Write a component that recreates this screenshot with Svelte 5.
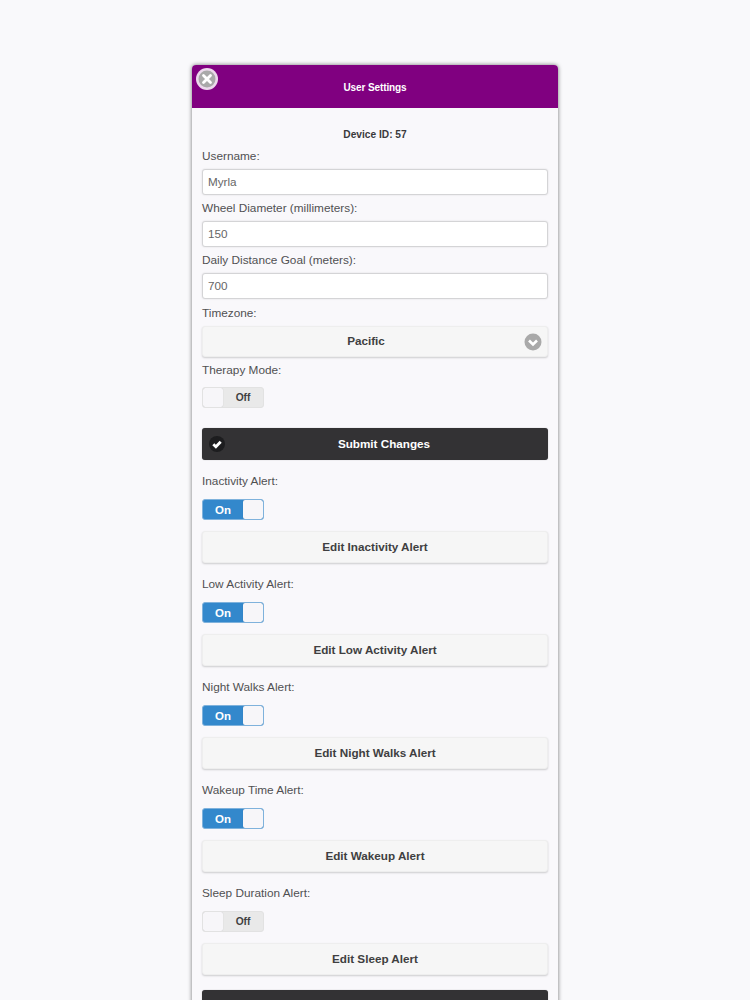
<script lang="ts">
	const fields = [
		{ label: 'Username:', value: 'Myrla' },
		{ label: 'Wheel Diameter (millimeters):', value: '150' },
		{ label: 'Daily Distance Goal (meters):', value: '700' }
	];

	const alerts = [
		{ label: 'Inactivity Alert:', on: true, button: 'Edit Inactivity Alert' },
		{ label: 'Low Activity Alert:', on: true, button: 'Edit Low Activity Alert' },
		{ label: 'Night Walks Alert:', on: true, button: 'Edit Night Walks Alert' },
		{ label: 'Wakeup Time Alert:', on: true, button: 'Edit Wakeup Alert' },
		{ label: 'Sleep Duration Alert:', on: false, button: 'Edit Sleep Alert' }
	];
</script>

{#snippet toggle(on: boolean)}
	<div class="toggle" class:on>
		{#if on}
			<span class="toggle-text">On</span>
			<span class="knob"></span>
		{:else}
			<span class="knob"></span>
			<span class="toggle-text">Off</span>
		{/if}
	</div>
{/snippet}

<div class="page">
	<div class="card">
		<header class="header">
			<span class="close">
				<svg viewBox="0 0 22 22" width="22" height="22">
					<circle cx="11" cy="11" r="11" fill="#fff" fill-opacity="0.85" />
					<circle cx="11" cy="11" r="8.5" fill="#a9a9a9" />
					<path d="M7.5 7.5l7 7M14.5 7.5l-7 7" stroke="#fff" stroke-width="2.8" stroke-linecap="round" />
				</svg>
			</span>
			<h1>User Settings</h1>
		</header>

		<div class="content">
			<p class="device">Device ID: 57</p>

			{#each fields as field}
				<p class="label field-label">{field.label}</p>
				<input class="input" type="text" value={field.value} />
			{/each}

			<p class="label zone-label">Timezone:</p>
			<div class="btn select">
				<span class="select-text">Pacific</span>
				<svg class="chevron" viewBox="0 0 18 18" width="18" height="18">
					<circle cx="9" cy="9" r="8.5" fill="#a9a9a9" />
					<path d="M5 7.5l4 4 4-4" fill="none" stroke="#fff" stroke-width="2.6" />
				</svg>
			</div>

			<p class="label therapy">Therapy Mode:</p>
			{@render toggle(false)}

			<div class="btn dark submit">
				<svg class="check" viewBox="0 0 16 16" width="16" height="16">
					<circle cx="8" cy="8" r="8" fill="#1d1d1f" />
					<path d="M4.3 8.2l2.6 2.6 4.8-5" fill="none" stroke="#fff" stroke-width="2.8" />
				</svg>
				Submit Changes
			</div>

			{#each alerts as alert}
				<section class="alert">
					<p class="label">{alert.label}</p>
					{@render toggle(alert.on)}
					<div class="btn edit">{alert.button}</div>
				</section>
			{/each}

			<div class="btn dark last"></div>
		</div>
	</div>
</div>

<style>
	:global(body) {
		margin: 0;
		background: #f9f9fb;
	}

	.page {
		height: 1000px;
		overflow: hidden;
		padding-top: 65px;
		box-sizing: border-box;
		font-family: 'Liberation Sans', Arial, sans-serif;
		color: #4a4a4c;
	}

	.card {
		width: 366px;
		margin: 0 auto;
		background: #f9f8fb;
		border-radius: 4px 4px 0 0;
		box-shadow: 0 0 4px rgba(0, 0, 0, 0.55);
	}

	.header {
		position: relative;
		height: 43px;
		display: flex;
		align-items: center;
		justify-content: center;
		background: #800080;
		border-radius: 4px 4px 0 0;
	}

	.header h1 {
		margin: 2px 0 0;
		font-size: 10px;
		letter-spacing: -0.1px;
		font-weight: 700;
		color: #fff;
	}

	.close {
		position: absolute;
		left: 4px;
		top: 3px;
		width: 22px;
		height: 22px;
	}

	.close svg,
	.chevron,
	.check {
		display: block;
	}

	.content {
		padding: 21px 10px 0;
		display: flex;
		flex-direction: column;
	}

	.device {
		margin: 0;
		height: 12px;
		line-height: 12px;
		font-size: 10.2px;
		font-weight: 700;
		text-align: center;
		color: #3a3a3c;
	}

	.label {
		margin: 0;
		height: 20px;
		line-height: 20px;
		font-size: 11.8px;
		color: #505052;
	}

	.field-label {
		margin-bottom: 3px;
	}

	.device + .field-label {
		margin-top: 5px;
	}

	.input {
		box-sizing: border-box;
		width: 100%;
		height: 26px;
		margin: 0 0 3px;
		padding: 0 5px 2px;
		border: 1px solid #d4d4d6;
		border-radius: 3px;
		background: #fff;
		box-shadow: 0 0 2px rgba(0, 0, 0, 0.12);
		font: 11.7px 'Liberation Sans', Arial, sans-serif;
		color: #666;
		outline: none;
	}

	.btn {
		box-sizing: border-box;
		width: 100%;
		height: 32px;
		padding-bottom: 2px;
		display: flex;
		align-items: center;
		justify-content: center;
		border-radius: 3px;
		font-size: 11.7px;
		font-weight: 700;
	}

	.select,
	.edit {
		background: #f6f6f6;
		border: 1px solid #eeeeee;
		box-shadow: 0 1px 2px rgba(0, 0, 0, 0.18);
		color: #3f3f41;
	}

	.zone-label {
		margin-top: 1px;
	}

	.select {
		position: relative;
		height: 31px;
		margin-top: 3px;
		padding-right: 18px;
	}

	.chevron {
		position: absolute;
		right: 5px;
		top: 6px;
	}

	.therapy {
		margin-top: 3px;
		margin-bottom: 7px;
	}

	.toggle {
		box-sizing: border-box;
		width: 62px;
		height: 21px;
		display: flex;
		align-items: stretch;
		border: 1px solid #e2e2e2;
		border-radius: 3px;
		overflow: hidden;
		background: #e9e9e9;
		font-size: 10.2px;
		font-weight: 700;
		color: #3f3f41;
	}

	.toggle.on {
		background: #3388cc;
		border-color: #7fb2dc;
		color: #fff;
		font-size: 11.5px;
	}

	.toggle-text {
		flex: 1;
		display: flex;
		align-items: center;
		justify-content: center;
	}

	.knob {
		width: 20px;
		background: #f7f6f9;
		box-shadow: 0 0 1px rgba(0, 0, 0, 0.2);
		border-radius: 2px;
	}

	.dark {
		background: #333234;
		color: #fff;
		box-shadow: 0 0 1px rgba(0, 0, 0, 0.4);
	}

	.submit {
		position: relative;
		margin-top: 20px;
		margin-bottom: 11px;
		padding-left: 18px;
	}

	.check {
		position: absolute;
		left: 7px;
		top: 8px;
	}

	.alert {
		display: flex;
		flex-direction: column;
		margin-bottom: 11px;
	}

	.alert .label {
		margin-bottom: 8px;
	}

	.alert .edit {
		margin-top: 11px;
	}

	.last {
		margin-top: 4px;
	}
</style>
